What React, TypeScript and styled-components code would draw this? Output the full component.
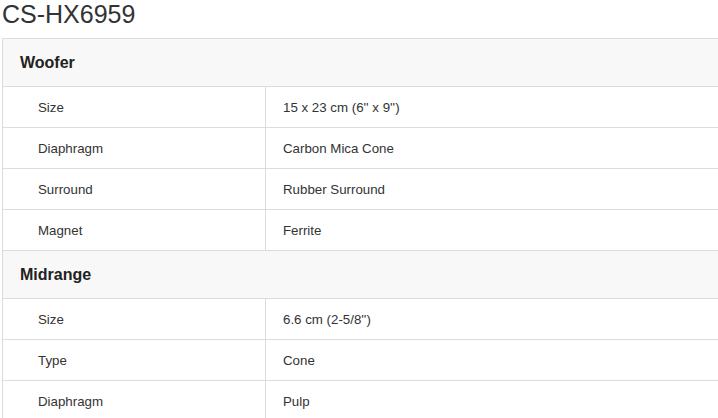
import React from "react";
import styled, { createGlobalStyle } from "styled-components";

const Global = createGlobalStyle`
  html, body { margin: 0; padding: 0; background: #fff; overflow: hidden; }
  body { font-family: Arial, "Liberation Sans", sans-serif; color: #333; }
`;

const Page = styled.div`
  padding-left: 2px;
  width: 730px;
`;

const Title = styled.h1`
  margin: 0 0 10px 0;
  font-size: 25px;
  line-height: 28px;
  font-weight: 400;
  color: #333;
`;

const Table = styled.table`
  width: 722px;
  border-collapse: collapse;
  border: 1px solid #dcdcdc;
  table-layout: fixed;
`;

const GroupCell = styled.th`
  height: 47px;
  padding: 0 0 0 17px;
  text-align: left;
  font-size: 16px;
  font-weight: 700;
  background: #f8f8f8;
  border: 1px solid #dcdcdc;
  color: #222;
`;

const LabelCell = styled.td`
  width: 262px;
  height: 40px;
  padding: 0 0 0 35px;
  font-size: 13.3px;
  border: 1px solid #dcdcdc;
  color: #333;
`;

const ValueCell = styled.td`
  height: 40px;
  padding: 0 0 0 17px;
  font-size: 13.3px;
  border: 1px solid #dcdcdc;
  color: #333;
`;

type Group = { name: string; rows: [string, string][] };

const groups: Group[] = [
  {
    name: "Woofer",
    rows: [
      ["Size", "15 x 23 cm (6'' x 9'')"],
      ["Diaphragm", "Carbon Mica Cone"],
      ["Surround", "Rubber Surround"],
      ["Magnet", "Ferrite"],
    ],
  },
  {
    name: "Midrange",
    rows: [
      ["Size", "6.6 cm (2-5/8'')"],
      ["Type", "Cone"],
      ["Diaphragm", "Pulp"],
    ],
  },
];

export default function App() {
  return (
    <Page>
      <Global />
      <Title>CS-HX6959</Title>
      <Table>
        <colgroup>
          <col style={{ width: 263 }} />
          <col />
        </colgroup>
        <tbody>
          {groups.map((g) => (
            <React.Fragment key={g.name}>
              <tr>
                <GroupCell colSpan={2}>{g.name}</GroupCell>
              </tr>
              {g.rows.map(([k, v]) => (
                <tr key={g.name + k}>
                  <LabelCell>{k}</LabelCell>
                  <ValueCell>{v}</ValueCell>
                </tr>
              ))}
            </React.Fragment>
          ))}
        </tbody>
      </Table>
    </Page>
  );
}
